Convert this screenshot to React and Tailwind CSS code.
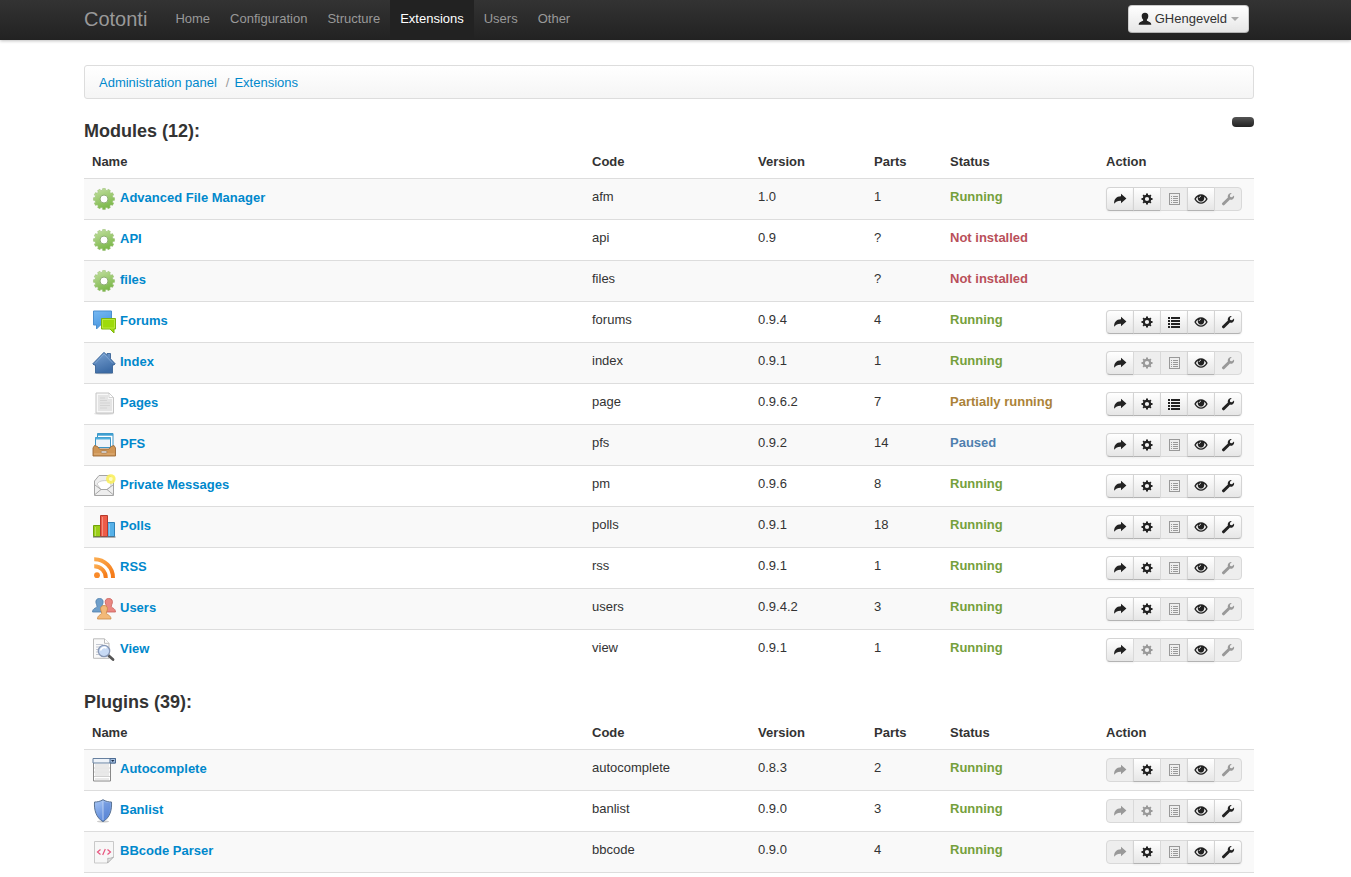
import React from "react";
import clsx from "clsx";

const navItems = ["Home", "Configuration", "Structure", "Extensions", "Users", "Other"];

const statusColors = {
  Running: "text-[#75a03c]",
  "Not installed": "text-[#b9505a]",
  "Partially running": "text-[#ab8238]",
  Paused: "text-[#4f7fae]",
};

// actions: one letter per enabled button (open, config, structure, rights, tools)
const modules = [
  { icon: "gear", name: "Advanced File Manager", code: "afm", version: "1.0", parts: "1", status: "Running", actions: "ocr" },
  { icon: "gear", name: "API", code: "api", version: "0.9", parts: "?", status: "Not installed" },
  { icon: "gear", name: "files", code: "files", version: "", parts: "?", status: "Not installed" },
  { icon: "forums", name: "Forums", code: "forums", version: "0.9.4", parts: "4", status: "Running", actions: "ocsrt" },
  { icon: "home", name: "Index", code: "index", version: "0.9.1", parts: "1", status: "Running", actions: "or" },
  { icon: "page", name: "Pages", code: "page", version: "0.9.6.2", parts: "7", status: "Partially running", actions: "ocsrt" },
  { icon: "tray", name: "PFS", code: "pfs", version: "0.9.2", parts: "14", status: "Paused", actions: "ocrt" },
  { icon: "mail", name: "Private Messages", code: "pm", version: "0.9.6", parts: "8", status: "Running", actions: "ocrt" },
  { icon: "chart", name: "Polls", code: "polls", version: "0.9.1", parts: "18", status: "Running", actions: "ocrt" },
  { icon: "rss", name: "RSS", code: "rss", version: "0.9.1", parts: "1", status: "Running", actions: "ocr" },
  { icon: "users", name: "Users", code: "users", version: "0.9.4.2", parts: "3", status: "Running", actions: "ocr" },
  { icon: "view", name: "View", code: "view", version: "0.9.1", parts: "1", status: "Running", actions: "or" },
];

const plugins = [
  { icon: "list", name: "Autocomplete", code: "autocomplete", version: "0.8.3", parts: "2", status: "Running", actions: "cr" },
  { icon: "shield", name: "Banlist", code: "banlist", version: "0.9.0", parts: "3", status: "Running", actions: "rt" },
  { icon: "code", name: "BBcode Parser", code: "bbcode", version: "0.9.0", parts: "4", status: "Running", actions: "crt" },
];

function gearPoints(teeth, outer, inner) {
  const points = [];
  for (let i = 0; i < teeth; i++) {
    [[-0.32, inner], [-0.24, outer], [0.24, outer], [0.32, inner]].forEach(([offset, r]) => {
      const a = ((i + offset) / teeth) * Math.PI * 2;
      points.push(`${(12 + r * Math.sin(a)).toFixed(2)},${(12 - r * Math.cos(a)).toFixed(2)}`);
    });
  }
  return points.join(" ");
}

const drawings = {
  gear: (
    <>
      <polygon points={gearPoints(12, 10.6, 9)} fill="url(#g-green)" stroke="#93bb6c" strokeWidth="0.5" />
      <circle cx="12" cy="12" r="4" fill="#fff" stroke="#8fae75" strokeWidth="1" />
    </>
  ),
  forums: (
    <>
      <path d="M1.5 1h18v14H8.5L4.5 19v-4h-3z" fill="url(#g-blue)" stroke="#4b8fd0" />
      <path d="M9.5 8.5h14v10.5h-1.5v4L18 19H9.5z" fill="#9edb0b" stroke="#7fb50d" />
      <path d="M10.5 9.5h12v8.5h-12z" fill="none" stroke="#c6ef55" strokeWidth="0.7" />
    </>
  ),
  home: (
    <>
      <ellipse cx="12" cy="22.3" rx="10" ry="0.9" fill="#ccc" />
      <path d="M12 1.3l3 3V2.5h3.5v5.3l4.7 5L22 14h-1.5v8h-17v-8H2l-1.2-1.2z" fill="url(#g-navy)" stroke="#3a6496" strokeWidth="0.9" />
      <path d="M12 3L3 12.5M12 3l9 9.5" stroke="#8db2db" strokeWidth="0.7" fill="none" />
    </>
  ),
  page: (
    <>
      <ellipse cx="12" cy="21.7" rx="10" ry="1" fill="#ddd" />
      <path d="M4 1h13l4.5 4.5V21H4z" fill="#f8f8f8" stroke="#c4c4c4" />
      <path d="M6 3h10v4h4v12H6z" fill="#e4e4e4" />
      <path d="M17 1v4.5h4.5z" fill="#fff" stroke="#c4c4c4" strokeWidth="0.7" />
      <path d="M8 6h5M8 8.5h7M8 11h10M8 13.5h10M8 16h7" stroke="#d4d4d4" />
    </>
  ),
  tray: (
    <>
      <path d="M5.5 0.5h15.5v14H5.5z" fill="#fff" stroke="#3d94c4" />
      <path d="M5.5 0.5h15.5v2.2H5.5z" fill="#3fa0d2" />
      <path d="M3.5 4.5h15v10h-15z" fill="#eef4fa" stroke="#3d94c4" />
      <path d="M3.5 4.5h15v2h-15z" fill="#50b0df" />
      <path d="M2.5 12.5L1 15v8h22.5v-8L22 12.5l-3 1-2 2.500H7.500L5.500 13.500z" fill="#cf9656" stroke="#9b6a38" strokeWidth="0.9" />
      <path d="M2 21h20.5" stroke="#e0b07a" />
      <rect x="9" y="18" width="6" height="2" rx="1" fill="#eee" stroke="#8a6a4a" strokeWidth="0.6" />
    </>
  ),
  mail: (
    <>
      <path d="M2.5 7L7 1.5h10.5L21.5 7v14.5h-19z" fill="#eee" stroke="#a5a5a5" />
      <path d="M5 10c3-4.500 8-3 13.500-3.500L19 12l-4 3.500H9z" fill="#fff" stroke="#c2c2c2" strokeWidth="0.8" />
      <path d="M3 20.5l6-5h6l6 5M3 11l6 4.5M21 11l-6 4.5" fill="none" stroke="#a2a2a2" strokeWidth="0.9" />
      <circle cx="18.8" cy="5" r="4.8" fill="#f9ef53" opacity="0.85" />
      <circle cx="18.8" cy="5" r="2" fill="#fffcc0" />
    </>
  ),
  chart: (
    <>
      <path d="M1.5 10.5h7v11h-7z" fill="#9bce18" stroke="#71a30c" />
      <path d="M15.5 7.5h7v14h-7z" fill="#56b1e8" stroke="#2f82b9" />
      <path d="M8.5 0.5h7v21h-7z" fill="#ee5c48" stroke="#b63a2c" />
      <path d="M3.5 12v9M10.5 2v19M17.5 9v12" stroke="#fff" strokeOpacity="0.3" />
      <path d="M1 22h22.5" stroke="#666" />
    </>
  ),
  rss: (
    <g fill="none" stroke="url(#g-orange)">
      <circle cx="5" cy="19.2" r="2.9" fill="#f98a29" stroke="none" />
      <path d="M2.2 10.3A11.5 11.5 0 0 1 13.8 22" strokeWidth="4" />
      <path d="M2.2 3.2A18.5 18.5 0 0 1 21 22" strokeWidth="4" />
    </g>
  ),
  users: (
    <>
      <path d="M7.5 1.5c3 0 4 2 3.5 4.5-.3 1.5-1 2-1 3.5 0 1.5 4 1.5 4 5.5H.5c0-4 4.500-4 4.500-5.500 0-1.500-.7-2-1-3.500-.5-2.500.5-4.500 3.500-4.500z" fill="#6f9fca" stroke="#4f7fac" strokeWidth="0.8" />
      <path d="M16.8 1.500c3 0 4 2 3.500 4.500-.3 1.500-1 2-1 3.500 0 1.500 4.200 1.500 4.200 5.500H10c0-4 4.300-4 4.300-5.500 0-1.500-.7-2-1-3.500-.5-2.500.5-4.500 3.500-4.500z" fill="#ea8781" stroke="#c9605b" strokeWidth="0.8" />
      <path d="M12 8.500c3 0 3.800 2 3.300 4.500-.3 1.500-1 2-1 3.200 0 1.300 4.700 1.800 4.700 5.800H5.500c0-4 4.200-4.500 4.200-5.800 0-1.200-.7-1.700-1-3.200-.5-2.500.3-4.500 3.300-4.500z" fill="#f3b978" stroke="#c98845" strokeWidth="0.8" />
    </>
  ),
  view: (
    <>
      <path d="M1.5 0.8h11l4.500 4.500v15H1.5z" fill="#fafafa" stroke="#bbb" />
      <path d="M12.5 0.8v4.500H17" fill="#fff" stroke="#bbb" />
      <path d="M4 6.5h7M4 9h5M4 11.5h3M4 14h2.5M4 16.5h4" stroke="#c3c8d2" />
      <path d="M16.5 17.5l4.500 4" stroke="#555" strokeWidth="2.8" strokeLinecap="round" />
      <circle cx="12" cy="13" r="5.7" fill="#c7daf5" stroke="#8797b5" strokeWidth="1.3" />
      <path d="M8.5 12.5a4 4 0 0 1 6-2.5" stroke="#fff" strokeWidth="1.5" fill="none" />
    </>
  ),
  list: (
    <>
      <path d="M1.5 0.5h17v22.5h-17z" fill="#fff" stroke="#888" />
      <path d="M3 6h14v3H3zM3 11h14v2H3zM3 15h14v3H3zM3 20h14v2H3z" fill="#e9e9e9" />
      <path d="M2 10h16M2 14h16M2 18.5h16" stroke="#c4c4c4" strokeWidth="0.8" />
      <path d="M1 0.5h22.5v4.5H1z" fill="#eef3f9" stroke="#67809f" />
      <path d="M18 0.5h5.5v4.5H18z" fill="#a9c3e2" stroke="#4b6a92" />
      <path d="M19 2h3.5l-1.75 2z" fill="#1b2d4a" />
    </>
  ),
  shield: (
    <>
      <ellipse cx="11" cy="22.5" rx="6" ry="1" fill="#ccc" />
      <path d="M11 0.7c3 1.8 5.5 2.3 8.5 2.3.5 8-1.5 15.5-8.5 19.7C4 18.5 2 11 2.500 3 5.500 3 8 2.500 11 0.7z" fill="url(#g-shield)" stroke="#5a7394" />
      <path d="M11 2.3c2.5 1.4 4.7 1.9 7.2 2 .2 7-1.7 13-7.2 16.8z" fill="#5680cf" opacity="0.4" />
      <path d="M11 2v19" stroke="#c9dcf8" strokeWidth="0.8" />
    </>
  ),
  code: (
    <>
      <path d="M2.5 1.5h19v15.5l-6 6h-13z" fill="#f7f7f7" stroke="#c9c9c9" />
      <path d="M21.5 17l-6 6c.5-1.5.5-3 .2-4.7 2 .2 4-.3 5.800-1.300z" fill="#e4e4e4" stroke="#aaa" strokeWidth="0.8" />
      <path d="M8.5 9.500L5.500 12l3 2.500M15.500 9.500l3 2.500-3 2.500M13.300 9l-2.600 6" fill="none" stroke="#e8557f" strokeWidth="1.2" />
    </>
  ),
};

function ExtensionIcon({ name }) {
  return (
    <svg width="24" height="24" viewBox="0 0 24 24" className="shrink-0" aria-hidden="true">
      {drawings[name]}
    </svg>
  );
}

function Gradients() {
  const list = [
    ["g-green", "#c6e1a4", "#7cb84a"],
    ["g-blue", "#76b8f2", "#4a98e0"],
    ["g-navy", "#7ba3d3", "#3d6ca6"],
    ["g-orange", "#fbaa4d", "#f57c1b"],
    ["g-shield", "#a9c7f5", "#5b88da"],
  ];
  return (
    <svg width="0" height="0" className="absolute" aria-hidden="true">
      <defs>
        {list.map(([id, from, to]) => (
          <linearGradient key={id} id={id} x1="0" y1="0" x2="0.4" y2="1">
            <stop offset="0" stopColor={from} />
            <stop offset="1" stopColor={to} />
          </linearGradient>
        ))}
      </defs>
    </svg>
  );
}

const glyphs = {
  o: <path d="M8 1.700L13.400 6.500 8 11.300V8.700C4.800 8.600 2.800 9.300 1.200 11.800.800 7.500 3.300 4.300 8 4.200z" />,
  c: (
    <>
      <circle cx="7" cy="7" r="3.2" fill="none" stroke="currentColor" strokeWidth="2.2" />
      <path d="M6 1.500h2v2H6zM6 10.500h2v2H6zM1.500 6h2v2h-2zM10.500 6h2v2h-2zM2.500 3.800l1.300-1.300 1.500 1.500L4 5.300zM8.700 4l1.500-1.500 1.300 1.300L10 5.300zM2.500 10.200L4 8.700l1.300 1.300-1.500 1.500zM8.700 10L10 8.700l1.500 1.500-1.300 1.300z" />
    </>
  ),
  s: <path d="M1 2h2v2H1zM4 2h9v2H4zM1 5h2v2H1zM4 5h9v2H4zM1 8h2v2H1zM4 8h9v2H4zM1 11h2v2H1zM4 11h9v2H4z" />,
  alt: <path fillRule="evenodd" d="M2 1h11v12H2zM3 2v10h9V2zM4 4h1v1H4zM6 4h5v1H6zM4 6h1v1H4zM6 6h5v1H6zM4 8h1v1H4zM6 8h5v1H6zM4 10h1v1H4zM6 10h5v1H6z" />,
  r: (
    <>
      <path fillRule="evenodd" d="M0.300 7C2 3.800 4.200 2.300 7 2.300S12 3.800 13.700 7C12 10.200 9.800 11.700 7 11.700S2 10.200 0.300 7zM1.900 7c1.300 2.300 3 3.500 5.100 3.500S10.800 9.300 12.100 7c-.6-1-1.200-1.700-2-2.300.6 2.600-.7 4.800-3.100 4.800S3.300 7.300 3.900 4.700C3.100 5.300 2.500 6 1.900 7z" />
      <path d="M5.200 6c.1-1 .8-1.700 1.800-1.800" fill="none" stroke="#fff" strokeWidth="0.9" />
    </>
  ),
  t: <path d="M13 3.400c.4 1.700-.1 3-1.300 3.800-.9.600-1.900.6-2.700.3L3.400 13c-.5.5-1.200.5-1.700 0l-.5-.5c-.4-.4-.4-1.100 0-1.500L6.900 5.600C6.400 3.300 7.600 1 10.800 1L8.900 3l.3 1.900L11 5.200z" />,
};

const actionButtons = [
  ["o", "Open"],
  ["c", "Configuration"],
  ["s", "Structure"],
  ["r", "Rights"],
  ["t", "Administration"],
];

function Actions({ enabled }) {
  return (
    <div className="flex h-6">
      {actionButtons.map(([key, label], i) => {
        const on = enabled.includes(key);
        return (
          <button
            key={key}
            type="button"
            title={label}
            aria-label={label}
            disabled={!on}
            className={clsx(
              "flex h-6 w-7 items-center justify-center border",
              i > 0 && "-ml-px",
              i === 0 && "rounded-l",
              i === actionButtons.length - 1 && "rounded-r",
              on
                ? "border-[#d4d4d4] border-b-[#b3b3b3] bg-linear-to-b from-white to-[#e6e6e6] text-[#222] shadow-[0_1px_2px_rgba(0,0,0,0.05)]"
                : "border-[#d9d9d9] bg-[#eee] text-[#999]"
            )}
          >
            <svg width="14" height="14" viewBox="0 0 14 14" fill="currentColor" aria-hidden="true">
              {key === "s" && !on ? glyphs.alt : glyphs[key]}
            </svg>
          </button>
        );
      })}
    </div>
  );
}

function ExtensionTable({ title, rows, className }) {
  return (
    <section>
      <h3 className="pt-[2px] text-lg leading-[25px] font-bold">{title}</h3>
      <table className={clsx("w-full table-fixed border-separate border-spacing-0 text-left leading-5", className)}>
        <colgroup>
          <col />
          <col className="w-[166px]" />
          <col className="w-[116px]" />
          <col className="w-[76px]" />
          <col className="w-[156px]" />
          <col className="w-[156px]" />
        </colgroup>
        <thead>
          <tr>
            {["Name", "Code", "Version", "Parts", "Status", "Action"].map((label) => (
              <th key={label} className="px-2 pt-2 pb-[6px] font-bold">{label}</th>
            ))}
          </tr>
        </thead>
        <tbody>
          {rows.map((row) => (
            <tr key={row.code} className="align-top odd:bg-[#f9f9f9] [&>td]:border-t [&>td]:border-[#ddd] [&>td]:p-2">
              <td>
                <a href="#" className="flex items-start gap-1 leading-[22px] font-bold text-[#0088cc]">
                  <ExtensionIcon name={row.icon} />
                  {row.name}
                </a>
              </td>
              <td>{row.code}</td>
              <td>{row.version}</td>
              <td>{row.parts}</td>
              <td className={clsx("font-bold", statusColors[row.status])}>{row.status}</td>
              <td>{row.actions && <Actions enabled={row.actions} />}</td>
            </tr>
          ))}
        </tbody>
      </table>
    </section>
  );
}

function Navbar() {
  return (
    <header className="bg-linear-to-b from-[#333] to-[#222] pr-[13px] shadow-[0_1px_3px_rgba(0,0,0,0.25)]">
      <div className="mx-auto flex h-10 max-w-[1170px] items-start">
        <a href="#" className="mr-[18px] pt-[9px] text-xl leading-5 text-[#999]">Cotonti</a>
        <nav className="flex h-full">
          {navItems.map((item) => (
            <a
              key={item}
              href="#"
              className={clsx(
                "h-full px-[10px] pt-[10px]",
                item === "Extensions" ? "bg-[#222] text-white" : "text-[#999]"
              )}
            >
              {item}
            </a>
          ))}
        </nav>
        <button
          type="button"
          className="mt-[5px] mr-[5px] ml-auto flex h-7 items-center rounded border border-[#ccc] border-b-[#b3b3b3] bg-linear-to-b from-white to-[#e6e6e6] px-[9px]"
        >
          <svg width="14" height="14" viewBox="0 0 14 14" fill="#222" className="mr-[3px]" aria-hidden="true">
            <path d="M7 0.800c2.200 0 3.500 1.200 3.300 3.500-.1 1.500-.6 2.500-1.400 3.300v1.200c1.500.9 4.400 1.200 4.400 4H.700c0-2.800 2.900-3.100 4.400-4V7.600C4.300 6.800 3.800 5.800 3.700 4.300 3.500 2 4.800.800 7 .800z" />
          </svg>
          GHengeveld
          <span className="ml-1 border-x-4 border-t-4 border-x-transparent border-t-[#aaa]" />
        </button>
      </div>
    </header>
  );
}

export default function App() {
  return (
    <div className="bg-white font-['Liberation_Sans',Arial,sans-serif] text-[13px] leading-[18px] text-[#333]">
      <Gradients />
      <Navbar />
      <main className="pr-[13px]">
        <div className="mx-auto max-w-[1170px] pt-[25px]">
          <nav className="mb-[18px] flex rounded-[3px] border border-[#ddd] bg-linear-to-b from-white to-[#f5f5f5] px-[14px] pt-2 pb-[6px]">
            <a href="#" className="text-[#0088cc]">Administration panel</a>
            <span className="mr-[5px] ml-[9px] text-[#999]">/</span>
            <a href="#" className="text-[#0088cc]">Extensions</a>
          </nav>
          <div className="float-right h-[10px] w-[22px] rounded bg-linear-to-b from-[#555] to-[#222]" />
          <ExtensionTable title="Modules (12):" rows={modules} className="mb-[18px]" />
          <ExtensionTable title="Plugins (39):" rows={plugins} className="border-b border-[#ddd]" />
        </div>
      </main>
    </div>
  );
}
